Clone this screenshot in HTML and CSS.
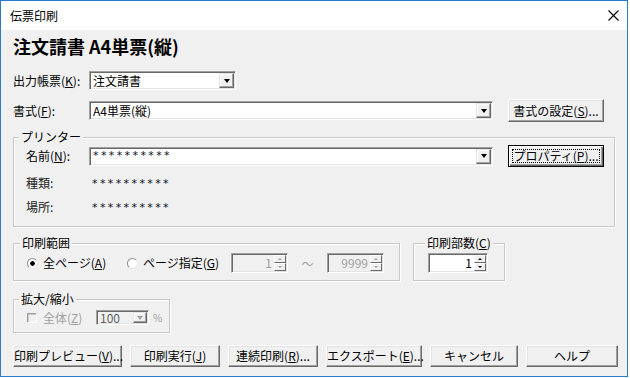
FILE: index.html
```html
<!DOCTYPE html>
<html lang="ja">
<head>
    <meta charset="UTF-8">
    <title>伝票印刷</title>
    <link rel="stylesheet" href="styles.css">
</head>

<body>
    <div class="window">
        <div class="titlebar">
            <span class="title">伝票印刷</span>
            <svg class="close" width="11" height="11" viewBox="0 0 11 11">
                <path d="M0.5 0.5L10.5 10.5M10.5 0.5L0.5 10.5" stroke="#000" stroke-width="1.1" fill="none"/>
            </svg>
        </div>

        <div class="client">
            <h1 class="heading">注文請書 A4単票(縦)</h1>

            <div class="row row-report">
                <span class="lbl">出力帳票(<u>K</u>):</span>
                <div class="combo combo-report">
                    <span class="combo-text">注文請書</span>
                    <span class="drop"></span>
                </div>
            </div>

            <div class="row row-format">
                <span class="lbl">書式(<u>F</u>):</span>
                <div class="combo combo-wide">
                    <span class="combo-text">A4単票(縦)</span>
                    <span class="drop"></span>
                </div>
                <button class="btn btn-side">書式の設定(<u>S</u>)...</button>
            </div>

            <fieldset class="group group-printer">
                <legend>プリンター</legend>
                <div class="group-body printer-body">
                    <div class="row row-name">
                        <span class="lbl lbl-in">名前(<u>N</u>):</span>
                        <div class="combo combo-wide">
                            <span class="combo-text stars">**********</span>
                            <span class="drop"></span>
                        </div>
                        <button class="btn btn-side btn-default"><span class="focus">プロパティ(<u>P</u>)...</span></button>
                    </div>
                    <div class="info info-first">
                        <span class="info-label">種類:</span>
                        <span class="stars">**********</span>
                    </div>
                    <div class="info info-second">
                        <span class="info-label">場所:</span>
                        <span class="stars">**********</span>
                    </div>
                </div>
            </fieldset>

            <div class="group-row">
                <fieldset class="group group-range">
                    <legend>印刷範囲</legend>
                    <div class="group-body range-body opts">
                        <span class="opt opt-all"><span class="radio checked"></span><span>全ページ(<u>A</u>)</span></span>
                        <span class="opt opt-page"><span class="radio"></span><span>ページ指定(<u>G</u>)</span></span>
                        <div class="spin off">
                            <span class="spin-val">1</span>
                            <span class="spin-btns"><span class="up"></span><span class="down"></span></span>
                        </div>
                        <span class="tilde">～</span>
                        <div class="spin off">
                            <span class="spin-val">9999</span>
                            <span class="spin-btns"><span class="up"></span><span class="down"></span></span>
                        </div>
                    </div>
                </fieldset>

                <fieldset class="group group-copies">
                    <legend>印刷部数(<u>C</u>)</legend>
                    <div class="group-body copies-body">
                        <div class="spin spin-copies">
                            <span class="spin-val">1</span>
                            <span class="spin-btns"><span class="up"></span><span class="down"></span></span>
                        </div>
                    </div>
                </fieldset>
            </div>

            <fieldset class="group group-zoom">
                <legend>拡大/縮小</legend>
                <div class="group-body zoom-body opts">
                    <span class="opt opt-chk off-text"><span class="chk"></span><span>全体(<u>Z</u>)</span></span>
                    <div class="combo combo-small">
                        <span class="combo-text">100</span>
                        <span class="drop drop-off"></span>
                    </div>
                    <span class="pct">%</span>
                </div>
            </fieldset>

            <div class="buttons">
                <button class="btn btn-preview">印刷プレビュー(<u>V</u>)...</button>
                <button class="btn btn-w90">印刷実行(<u>J</u>)</button>
                <button class="btn btn-w90">連続印刷(<u>R</u>)...</button>
                <button class="btn btn-export">エクスポート(<u>E</u>)...</button>
                <button class="btn btn-cancel">キャンセル</button>
                <button class="btn btn-help">ヘルプ</button>
            </div>
        </div>
    </div>
</body>
</html>
```

FILE: styles.css
```css
body {
    margin: 0;
    background-color: #ffffff;
    font-family: "Noto Sans CJK JP", "Noto Sans", sans-serif;
    font-size: 12px;
    color: #000;
}
.window {
    width: 628px;
    height: 377px;
    box-sizing: border-box;
    border: 1px solid #2b7ad0;
    background-color: #f0f0f0;
}
.titlebar {
    height: 29px;
    background-color: #ffffff;
    display: flex;
    align-items: center;
    justify-content: space-between;
    padding: 0 8px 0 9px;
}
.title {
    line-height: 14px;
}
.client {
    padding: 0 12px;
}
.heading {
    margin: 6px 0 0;
    font-size: 18px;
    line-height: 20px;
    font-weight: bold;
}
u {
    text-underline-offset: 1px;
}

/* rows */
.row {
    display: flex;
    align-items: center;
}
.row-report {
    margin-top: 15px;
    height: 19px;
}
.row-format {
    margin-top: 9px;
    height: 23px;
}
.row-name {
    height: 22px;
}
.lbl {
    width: 76px;
    flex: none;
    line-height: 14px;
}
.lbl-in {
    width: 63px;
}

/* combo boxes */
.combo {
    height: 19px;
    box-sizing: border-box;
    background-color: #ffffff;
    border: 1px solid;
    border-color: #a0a0a0 #ffffff #ffffff #a0a0a0;
    box-shadow: inset 1px 1px #696969, inset -1px -1px #e3e3e3;
    display: flex;
    align-items: center;
    padding: 0 1px 0 3px;
    flex: none;
}
.combo-report {
    width: 147px;
}
.combo-wide {
    width: 404px;
}
.combo-text {
    flex: 1;
    line-height: 14px;
    white-space: nowrap;
}
.drop {
    width: 15px;
    height: 15px;
    box-sizing: border-box;
    background-color: #f0f0f0;
    border: 1px solid;
    border-color: #e3e3e3 #696969 #696969 #e3e3e3;
    box-shadow: inset -1px -1px #a0a0a0, inset 1px 1px #ffffff;
    display: flex;
    align-items: center;
    justify-content: center;
}
.drop::after {
    content: "";
    border-left: 3px solid transparent;
    border-right: 3px solid transparent;
    border-top: 4px solid #000;
}
.stars {
    font-family: "DejaVu Sans", sans-serif;
    font-size: 11px;
    letter-spacing: 2.4px;
    color: #0a0f1e;
}

/* buttons */
.btn {
    font-family: inherit;
    font-size: 12px;
    line-height: 14px;
    color: #000;
    background-color: #f0f0f0;
    border: 1px solid;
    border-color: #ffffff #696969 #696969 #ffffff;
    box-shadow: inset -1px -1px #a0a0a0, inset 1px 1px #e3e3e3;
    padding: 0;
    height: 22px;
    box-sizing: border-box;
    flex: none;
    white-space: nowrap;
}
.btn-side {
    width: 96px;
    height: 23px;
    margin-left: 15px;
}
.btn-default {
    height: 22px;
    border-color: #000;
    box-shadow: inset 1px 1px #ffffff, inset -1px -1px #696969, inset -2px -2px #a0a0a0;
}
.focus {
    display: flex;
    align-items: center;
    justify-content: center;
    height: 12px;
    margin: 0 3px;
    border: 1px dotted #000;
}

/* group boxes */
.group {
    margin: 0;
    padding: 0;
    min-width: 0;
    box-sizing: border-box;
    border: 1px solid #c8c8c8;
    box-shadow: inset 1px 1px #ffffff, 1px 1px #ffffff;
}
.group legend {
    padding: 0 2px;
    margin-left: 5px;
    line-height: 14px;
    white-space: nowrap;
    background-color: #f0f0f0;
}
.group-printer {
    margin-top: 8px;
}
.printer-body {
    padding: 1px 10px 12px 12px;
}
.info {
    display: flex;
    align-items: center;
    height: 14px;
}
.info-first {
    margin-top: 9px;
}
.info-second {
    margin-top: 10px;
}
.info-label {
    width: 66px;
    line-height: 14px;
    color: #202020;
}
.group-row {
    display: flex;
    align-items: flex-start;
    gap: 13px;
    margin-top: 9px;
}
.group-range {
    width: 387px;
}
.group-range legend {
    margin-left: 6px;
}
.range-body {
    padding: 3px 0 7px 13px;
}
.group-copies {
    width: 92px;
}
.group-copies legend {
    margin-left: 11px;
}
.copies-body {
    padding: 3px 0 7px 14px;
}
.group-zoom {
    width: 157px;
    margin-top: 11px;
}
.zoom-body {
    padding: 4px 0 7px 13px;
}
.opts {
    display: flex;
    align-items: center;
}
.opt {
    display: flex;
    align-items: center;
    gap: 5px;
    line-height: 14px;
    flex: none;
    white-space: nowrap;
}
.opt-all {
    width: 100px;
}
.opt-page {
    width: 104px;
}
.opt-chk {
    width: 69px;
    gap: 6px;
}
.off-text {
    color: #a0a0a0;
}
.radio {
    width: 11px;
    height: 11px;
    box-sizing: border-box;
    border-radius: 50%;
    border: 1px solid;
    border-color: #8c8c8c #e8e8e8 #e8e8e8 #8c8c8c;
    background-color: #ffffff;
}
.radio.checked {
    background: radial-gradient(circle, #000 0 2px, #ffffff 2.6px);
}
.chk {
    width: 10px;
    height: 10px;
    box-sizing: border-box;
    border: 1px solid;
    border-color: #a0a0a0 #ffffff #ffffff #a0a0a0;
    box-shadow: inset 1px 1px #c8c8c8;
    background-color: #f0f0f0;
}

/* spinners */
.spin {
    height: 20px;
    width: 57px;
    box-sizing: border-box;
    background-color: #ffffff;
    border: 1px solid;
    border-color: #a0a0a0 #ffffff #ffffff #a0a0a0;
    box-shadow: inset 1px 1px #696969, inset -1px -1px #e3e3e3;
    display: flex;
    padding: 1px 1px 1px 2px;
    flex: none;
}
.spin.off {
    background-color: #f0f0f0;
    color: #a0a0a0;
}
.spin-copies {
    width: 60px;
}
.spin-val {
    flex: 1;
    text-align: right;
    padding-right: 2px;
    line-height: 16px;
}
.spin-btns {
    width: 12px;
    display: flex;
    flex-direction: column;
}
.spin-btns span {
    flex: 1;
    box-sizing: border-box;
    background-color: #f0f0f0;
    border: 1px solid;
    border-color: #ffffff #696969 #696969 #ffffff;
    display: flex;
    align-items: center;
    justify-content: center;
}
.spin-btns .up::after {
    content: "";
    border-left: 2px solid transparent;
    border-right: 2px solid transparent;
    border-bottom: 2px solid #000;
}
.spin-btns .down::after {
    content: "";
    border-left: 2px solid transparent;
    border-right: 2px solid transparent;
    border-top: 2px solid #000;
}
.spin.off .spin-btns .up::after {
    border-bottom-color: #a0a0a0;
}
.spin.off .spin-btns .down::after {
    border-top-color: #a0a0a0;
}
.tilde {
    width: 39px;
    text-align: center;
    color: #a0a0a0;
    flex: none;
}
.combo-small {
    width: 53px;
    height: 15px;
    background-color: #f0f0f0;
    color: #606060;
}
.drop-off {
    width: 14px;
    height: 11px;
}
.drop-off::after {
    border-top-color: #a0a0a0;
}
.pct {
    margin-left: 4px;
    color: #a0a0a0;
    font-size: 10px;
}

/* bottom buttons */
.buttons {
    display: flex;
    gap: 8px;
    margin-top: 12px;
}
.btn-preview {
    width: 109px;
}
.btn-w90 {
    width: 90px;
}
.btn-export {
    width: 96px;
}
.btn-cancel {
    width: 88px;
}
.btn-help {
    width: 92px;
}
```
